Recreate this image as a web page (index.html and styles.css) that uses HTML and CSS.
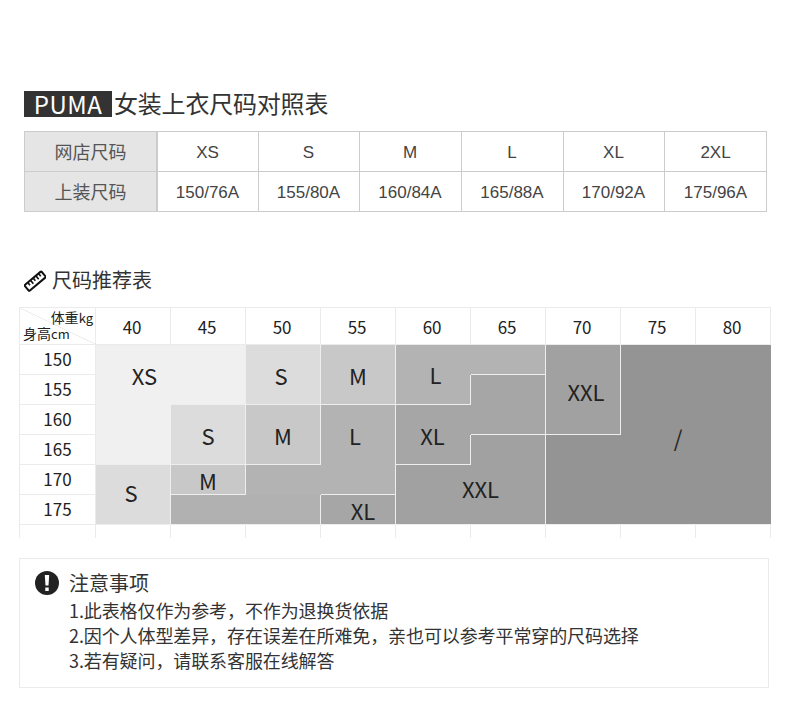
FILE: index.html
```html
<!DOCTYPE html>
<html lang="zh">
<head>
<meta charset="utf-8">
<title>PUMA 女装上衣尺码对照表</title>
<link rel="stylesheet" href="styles.css">
</head>
<body>
<main class="page">
  <h1 class="title"><span class="brand">PUMA</span><span class="title-text">女装上衣尺码对照表</span></h1>
  <div class="size-table">
    <div class="st-head">网店尺码</div><div class="st-cell">XS</div><div class="st-cell">S</div><div class="st-cell">M</div><div class="st-cell">L</div><div class="st-cell">XL</div><div class="st-cell">2XL</div>
    <div class="st-head st-last">上装尺码</div><div class="st-cell st-last">150/76A</div><div class="st-cell st-last">155/80A</div><div class="st-cell st-last">160/84A</div><div class="st-cell st-last">165/88A</div><div class="st-cell st-last">170/92A</div><div class="st-cell st-last">175/96A</div>
  </div>

  <h2 class="sub-title">
    <svg class="ruler" width="22" height="22" viewBox="0 0 22 22" aria-hidden="true"><g transform="rotate(-40 11 11)" fill="#fff" stroke="#111" stroke-width="2"><rect x="0" y="7.5" width="22" height="7.5" rx="1"/><path d="M4.5 8v3M8 8v4M11.5 8v3M15 8v4M18.5 8v3" stroke-width="1.6" fill="none"/></g></svg>
    <span class="sub-text">尺码推荐表</span>
  </h2>

  <div class="rec">
    <div class="c head corner"><span class="w">体重<small>kg</small></span><span class="h">身高<small>cm</small></span></div>
    <div class="c head">40</div><div class="c head">45</div><div class="c head">50</div><div class="c head">55</div><div class="c head">60</div><div class="c head">65</div><div class="c head">70</div><div class="c head">75</div><div class="c head">80</div>

    <div class="c label r2">150</div><div class="c label r3">155</div><div class="c label r4">160</div><div class="c label r5">165</div><div class="c label r6">170</div><div class="c label r7">175</div>

    <!-- XS -->
    <div class="b xs c2 r2 s2 t-xs">XS</div>
    <div class="b xs c2 r4 s2 bb"></div>
    <div class="b xs c3 r2 s2 br bb"></div>
    <!-- 150–155 row -->
    <div class="b s c4 r2 s2 br bb t-s1">S</div>
    <div class="b m c5 r2 s2 br bb">M</div>
    <div class="b l c6 r2 s2 bb tick t-l1">L</div>
    <div class="b l c7 r2 br bb"></div>
    <div class="b xl c7 r3 br"></div>
    <div class="b xxl c8 r2 s3 br bb t-xxl1">XXL</div>
    <div class="b na c9 w2 r2 s6 bb t-na">/</div>
    <div class="b na c8 r5 s3 bb"></div>
    <!-- 160–165 row -->
    <div class="b s c3 r4 s2 br bb">S</div>
    <div class="b m c4 r4 s2 br bb">M</div>
    <div class="b l c5 r4 s2 br t-l2">L</div>
    <div class="b xl c6 r4 s2 bb tick t-xl1">XL</div>
    <div class="b xl c7 r4 br bb"></div>
    <div class="b xxl c7 r5 br"></div>
    <!-- 170–175 row -->
    <div class="b s c2 r6 s2 br bb t-s2">S</div>
    <div class="b m c3 r6 br bb">M</div>
    <div class="b l c4 r6"></div>
    <div class="b l c5 r6 br bb"></div>
    <div class="b l2 c3 w2 r7 br bb"></div>
    <div class="b xl c5 r7 br bb t-xl2">XL</div>
    <div class="b xxl c6 w2 r6 s2 br bb t-xxl2">XXL</div>

    <div class="c stub"></div><div class="c stub"></div><div class="c stub"></div><div class="c stub"></div><div class="c stub"></div><div class="c stub"></div><div class="c stub"></div><div class="c stub"></div><div class="c stub"></div><div class="c stub"></div>
  </div>

  <section class="notes">
    <svg class="warn" width="24" height="24" viewBox="0 0 24 24" aria-hidden="true"><circle cx="12" cy="12" r="12" fill="#222"/><path d="M9.8 4h4.4l-.7 10.5h-3z" fill="#fff"/><rect x="10.3" y="16.5" width="3.4" height="3.5" fill="#fff"/></svg>
    <div class="notes-body">
      <h3 class="notes-title">注意事项</h3>
      <p class="note">1.此表格仅作为参考，不作为退换货依据</p>
      <p class="note">2.因个人体型差异，存在误差在所难免，亲也可以参考平常穿的尺码选择</p>
      <p class="note">3.若有疑问，请联系客服在线解答</p>
    </div>
  </section>
</main>
</body>
</html>
```
FILE: styles.css
```css
* { box-sizing: border-box; }
html, body { margin: 0; padding: 0; background: #fff; }
body { font-family: "Noto Sans CJK SC", "Noto Sans", sans-serif; color: #222; }
.page { width: 790px; height: 724px; padding: 91px 0 0 19px; overflow: hidden; }

.title { display: flex; align-items: center; gap: 2px; height: 26px; margin: 0 0 14px 5px; font-size: 24px; font-weight: 400; line-height: 26px; color: #333; }
.title-text { letter-spacing: -0.2px; padding-bottom: 2px; }
.brand { width: 88px; height: 26px; background: #333; color: #fff; text-align: center; font-size: 24px; line-height: 26px; letter-spacing: 0.5px; }

.size-table { display: grid; grid-template-columns: 134px 101px 101px 102px 102px 101px 102px; grid-template-rows: 40px 41px; width: 743px; margin-left: 5px; border-right: 1px solid #ccc; }
.st-head, .st-cell { display: flex; align-items: center; justify-content: center; border-top: 1px solid #ccc; border-left: 1px solid #ccc; color: #555; font-size: 17px; }
.st-head { background: #e5e5e5; font-size: 18px; border-right: 2px solid #ccc; padding-bottom: 2px; }
.st-cell { font-family: "Liberation Sans", Arial, sans-serif; color: #444; border-left: 0; border-right: 1px solid #ccc; padding: 2px 1px 0 0; }
.st-cell:nth-child(7n) { border-right: 0; }
.st-last { border-bottom: 1px solid #ccc; }

.sub-title { display: flex; align-items: center; gap: 6px; height: 24px; margin: 57px 0 14px 5px; font-size: 20px; font-weight: 400; line-height: 24px; color: #333; }
.sub-text { padding-bottom: 2px; }
.ruler { flex: none; }

.rec { display: grid; grid-template-columns: 77px repeat(9, 75px); grid-template-rows: 38px repeat(6, 30px) 13px; width: 752px; font-size: 17px; color: #222; }
.c { display: flex; align-items: center; justify-content: center; border-right: 1px solid #ebebeb; border-bottom: 1px solid #ebebeb; }
.c:nth-child(-n+10) { border-top: 1px solid #ebebeb; }
.head { font-size: 17px; padding: 1px 2px 0 0; letter-spacing: -0.3px; }
.corner { position: relative; border-left: 1px solid #ebebeb; display: block; background: linear-gradient(to top right, transparent calc(50% - 0.6px), #e4e4e4, transparent calc(50% + 0.6px)); font-size: 14px; line-height: 16px; padding: 1px 2px 0 3px; letter-spacing: 0; }
.corner .w { display: block; text-align: right; }
.corner .h { display: block; }
.corner small { font-size: 13px; line-height: 1; }
.label { grid-column: 1; border-left: 1px solid #ebebeb; padding-bottom: 2px; }
.stub { grid-row: 8; border-bottom: 0; }
.stub:nth-last-child(10) { border-left: 1px solid #ebebeb; }

.b { display: flex; align-items: center; justify-content: center; position: relative; font-size: 22px; line-height: 1; color: #222; }
.r2 { grid-row-start: 2; } .r3 { grid-row-start: 3; } .r4 { grid-row-start: 4; } .r5 { grid-row-start: 5; } .r6 { grid-row-start: 6; } .r7 { grid-row-start: 7; }
.c2 { grid-column-start: 2; } .c3 { grid-column-start: 3; } .c4 { grid-column-start: 4; } .c5 { grid-column-start: 5; } .c6 { grid-column-start: 6; } .c7 { grid-column-start: 7; } .c8 { grid-column-start: 8; } .c9 { grid-column-start: 9; }
.w2 { grid-column-end: span 2; }
.s2 { grid-row-end: span 2; } .s3 { grid-row-end: span 3; } .s6 { grid-row-end: span 6; }
.br { border-right: 1px solid #eee; }
.bb { border-bottom: 1px solid #eee; }
.tick::after { content: ""; position: absolute; right: 0; bottom: 0; width: 1px; height: 50%; background: #eee; }

.xs { background: #f0f0f0; }
.s { background: #dcdcdc; }
.m { background: #c8c8c8; }
.l { background: #b3b3b3; }
.l2 { background: #b1b1b1; }
.xl { background: #a6a6a6; }
.xxl { background: #a1a1a1; }
.na { background: #949494; }

.t-xs { padding-left: 22px; }
.t-s1 { padding-right: 4px; }
.t-l1 { padding-left: 4px; padding-bottom: 1px; }
.t-l2 { padding-right: 6px; }
.t-xl1 { padding-right: 2px; }
.t-xxl1 { padding-left: 6px; padding-top: 2px; }
.t-s2 { padding-right: 4px; padding-bottom: 6px; }
.t-xl2 { padding-left: 10px; }
.t-xxl2 { padding-left: 20px; padding-bottom: 14px; }
.t-na { padding-right: 36px; padding-top: 4px; }

.notes { display: flex; gap: 10px; width: 750px; height: 130px; margin-top: 20px; padding: 11px 15px; border: 1px solid #ebebeb; }
.warn { flex: none; margin-top: 1px; }
.notes-title { margin: 0 0 3px; font-size: 20px; font-weight: 400; line-height: 25px; color: #333; }
.note { margin: 0; font-size: 18px; line-height: 25px; color: #333; letter-spacing: -0.1px; }
```
